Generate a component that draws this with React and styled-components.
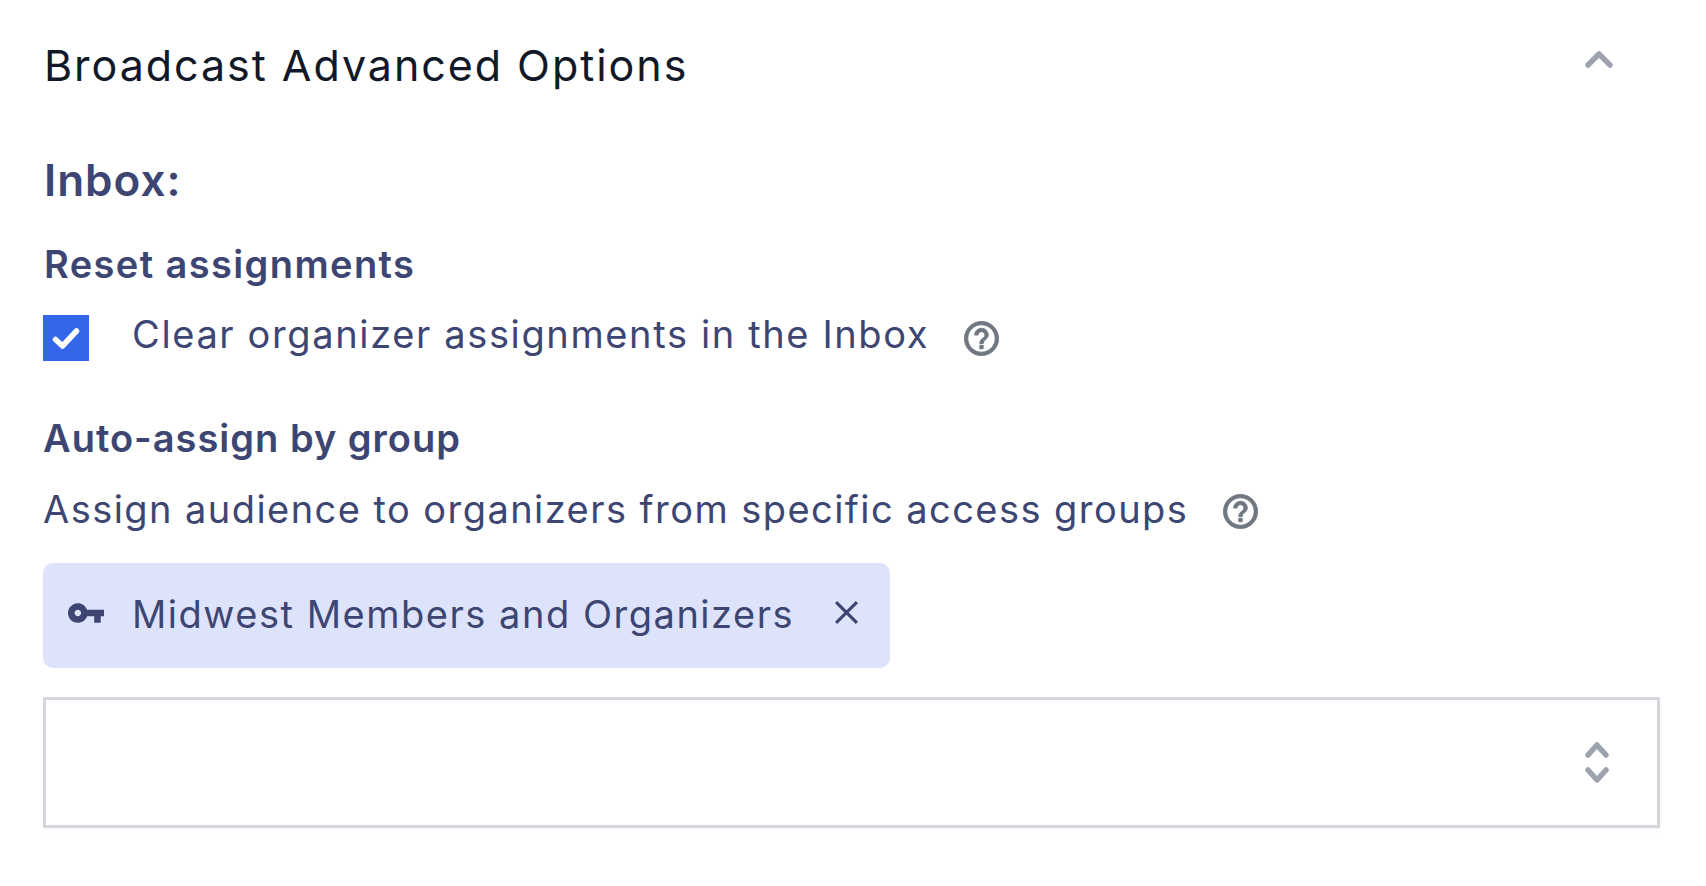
import React from 'react'
import styled, { createGlobalStyle } from 'styled-components'

const GlobalStyle = createGlobalStyle`
  html, body {
    margin: 0;
    background: #fff;
    font-family: 'Inter', 'Liberation Sans', sans-serif;
  }
`

const HelpIcon = () => (
  <HelpSvg viewBox="0 0 24 24">
    <path d="M11 18h2v-2h-2v2zm1-16C6.48 2 2 6.48 2 12s4.48 10 10 10 10-4.48 10-10S17.52 2 12 2zm0 18c-4.41 0-8-3.59-8-8s3.59-8 8-8 8 3.59 8 8-3.59 8-8 8zm0-14c-2.21 0-4 1.79-4 4h2c0-1.1.9-2 2-2s2 .9 2 2c0 2-3 1.75-3 5h2c0-2.25 3-2.5 3-5 0-2.21-1.79-4-4-4z" />
  </HelpSvg>
)

const Chevron = ({ down, width = 28, height = 17 }) => (
  <svg width={width} height={height} viewBox={`0 0 ${width} ${height}`} fill="none">
    <path
      d={
        down
          ? `M3 3 L${width / 2} ${height - 3} L${width - 3} 3`
          : `M3 ${height - 3} L${width / 2} 3 L${width - 3} ${height - 3}`
      }
      stroke="#9ca3af"
      strokeWidth="5.5"
      strokeLinecap="round"
      strokeLinejoin="round"
    />
  </svg>
)

export default function App() {
  return (
    <Page>
      <GlobalStyle />
      <Header>
        <Title>Broadcast Advanced Options</Title>
        <CollapseToggle>
          <Chevron />
        </CollapseToggle>
      </Header>
      <SectionTitle>Inbox:</SectionTitle>
      <Label>Reset assignments</Label>
      <CheckRow>
        <CheckBox>
          <svg width="28" height="23" viewBox="0 0 28 23" fill="none">
            <path
              d="M3.5 12.5 L10.5 19 L24.5 4"
              stroke="#fff"
              strokeWidth="5.5"
              strokeLinecap="round"
              strokeLinejoin="round"
            />
          </svg>
        </CheckBox>
        <CheckText>Clear organizer assignments in the Inbox</CheckText>
        <HelpIcon />
      </CheckRow>
      <GroupLabel>Auto-assign by group</GroupLabel>
      <HelpRow>
        <HelpText>Assign audience to organizers from specific access groups</HelpText>
        <HelpIcon />
      </HelpRow>
      <Chip>
        <KeySvg viewBox="1 6 22 12">
          <path d="M12.65 10C11.83 7.67 9.61 6 7 6c-3.31 0-6 2.69-6 6s2.69 6 6 6c2.61 0 4.83-1.67 5.65-4H17v4h4v-4h2v-4H12.65zM7 14c-1.1 0-2-.9-2-2s.9-2 2-2 2 .9 2 2-.9 2-2 2z" />
        </KeySvg>
        <BodyText>Midwest Members and Organizers</BodyText>
        <CloseSvg viewBox="0 0 24 24">
          <path d="M2 2 L22 22 M22 2 L2 22" />
        </CloseSvg>
      </Chip>
      <SelectBox>
        <Chevrons>
          <Chevron width={24} height={16} />
          <Chevron down width={24} height={16} />
        </Chevrons>
      </SelectBox>
    </Page>
  )
}

const Page = styled.div`
  display: flex;
  flex-direction: column;
  align-items: flex-start;
  padding: 42px 46px 0 43px;
  height: 886px;
  box-sizing: border-box;
  overflow: hidden;
`
const Header = styled.div`
  display: flex;
  justify-content: space-between;
  align-items: flex-start;
  align-self: stretch;
  padding-right: 47px;
`
const CollapseToggle = styled.div`
  padding-top: 9px;
`
const Title = styled.div`
  margin-left: 1px;
  font-size: 43px;
  line-height: 46px;
  font-weight: 400;
  letter-spacing: 1.95px;
  color: #111827;
`
const SectionTitle = styled.div`
  margin-top: 67px;
  margin-left: 1px;
  font-size: 44px;
  line-height: 50px;
  font-weight: 600;
  letter-spacing: 1px;
  color: #3d4673;
`
const Label = styled.div`
  margin-top: 39px;
  margin-left: 1px;
  font-size: 38px;
  line-height: 40px;
  font-weight: 600;
  letter-spacing: 1.4px;
  color: #3d4673;
`
const GroupLabel = styled(Label)`
  margin-top: 0;
  margin-left: 0;
  letter-spacing: 1px;
`
const BodyText = styled.span`
  padding-bottom: 4px;
  font-size: 38px;
  line-height: 42px;
  font-weight: 400;
  letter-spacing: 1.52px;
  color: #3d4673;
`
const CheckText = styled(BodyText)`
  padding-bottom: 8px;
  letter-spacing: 1.63px;
`
const HelpText = styled(BodyText)`
  letter-spacing: 1.44px;
`
const CheckRow = styled.div`
  display: flex;
  align-items: center;
  margin-top: 31px;
  height: 46px;
  margin-bottom: 57px;
`
const HelpRow = styled.div`
  display: flex;
  align-items: center;
  margin-top: 30px;
  height: 46px;
`
const CheckBox = styled.div`
  display: flex;
  align-items: center;
  justify-content: center;
  width: 46px;
  height: 46px;
  margin-right: 43px;
  background: #3366e8;
`
const HelpSvg = styled.svg`
  width: 41px;
  height: 41px;
  margin-left: 32px;
  fill: #6f7780;
  stroke: #6f7780;
  stroke-width: 0.5;
`
const Chip = styled.div`
  display: flex;
  align-items: center;
  box-sizing: border-box;
  width: 847px;
  height: 105px;
  margin-top: 29px;
  padding-left: 25px;
  border-radius: 10px;
  background: #dee3fc;
`
const KeySvg = styled.svg`
  width: 36px;
  height: 20px;
  margin-right: 28px;
  margin-top: -6px;
  fill: #3d4673;
`
const CloseSvg = styled.svg`
  width: 25px;
  height: 25px;
  margin-left: 40px;
  margin-top: -6px;
  fill: none;
  stroke: #3d4673;
  stroke-width: 3;
`
const SelectBox = styled.div`
  display: flex;
  align-items: center;
  justify-content: flex-end;
  align-self: stretch;
  box-sizing: border-box;
  height: 131px;
  margin-top: 29px;
  padding-right: 48px;
  border: 3px solid #d3d7dc;
  box-shadow: 0 2px 4px rgba(0, 0, 0, 0.04);
`
const Chevrons = styled.div`
  display: flex;
  flex-direction: column;
  gap: 9px;
`
